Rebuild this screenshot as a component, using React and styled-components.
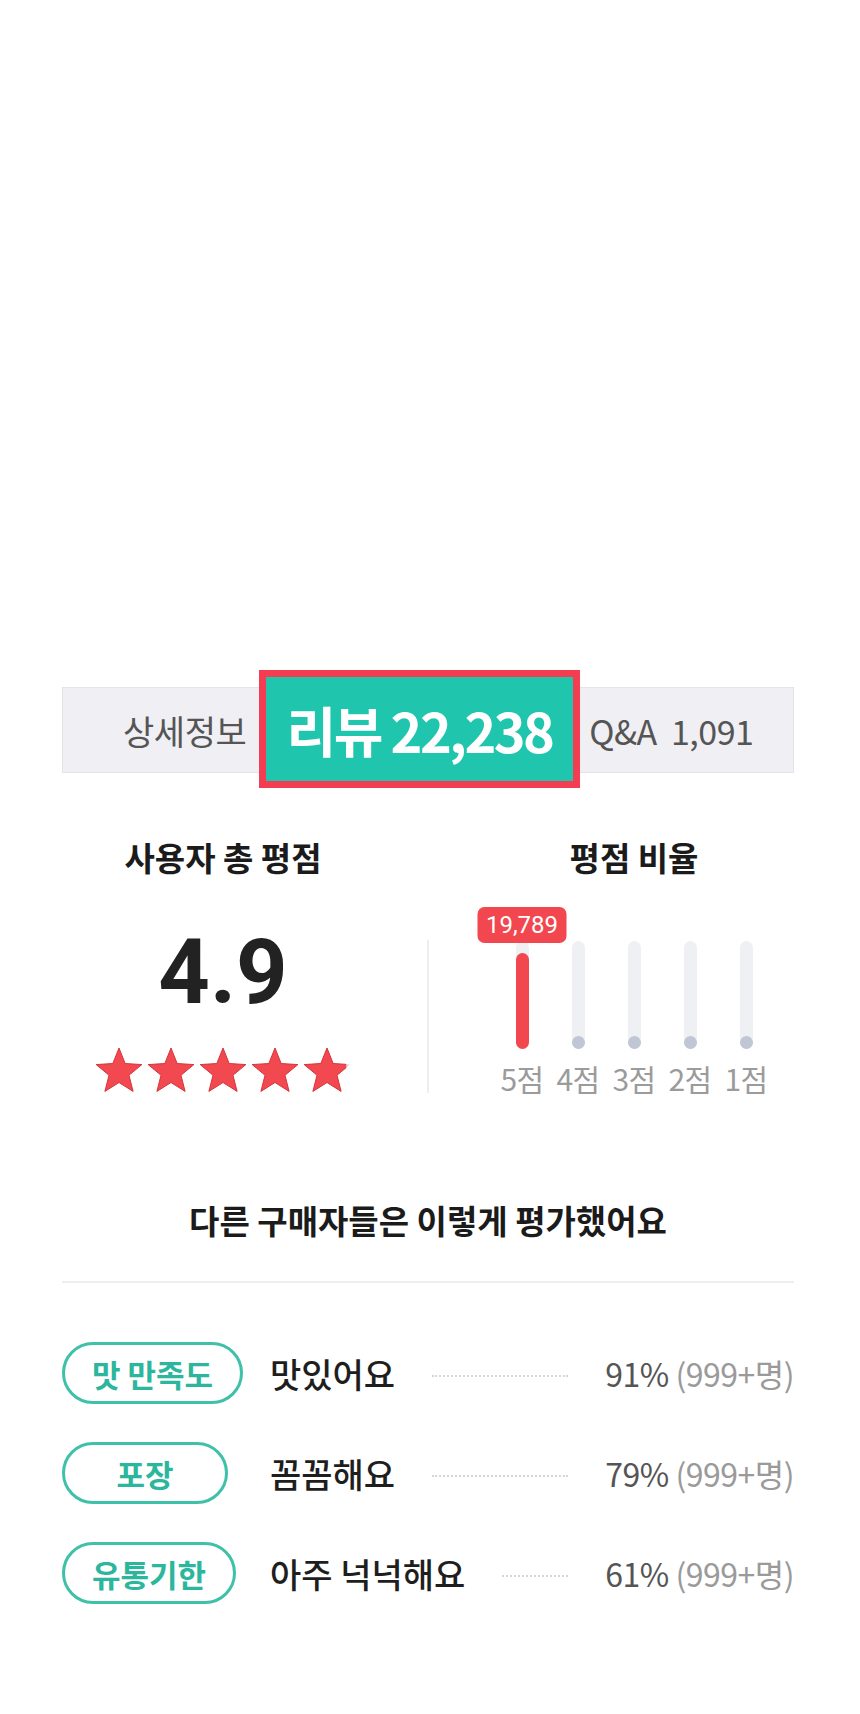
import React from 'react';
import styled, { createGlobalStyle } from 'styled-components';

const GlobalStyle = createGlobalStyle`
  html, body { margin: 0; padding: 0; background: #fff; }
  body {
    font-family: "Noto Sans CJK KR", "Noto Sans", sans-serif;
    -webkit-font-smoothing: antialiased;
  }
  * { box-sizing: border-box; }
`;

const Page = styled.div`
  width: 860px;
  min-height: 1714px;
  padding: 687px 66px 0 62px;
`;

const Tabs = styled.nav`
  display: grid;
  grid-template-columns: repeat(3, 1fr);
  height: 86px;
  background: #efeff4;
  border: 1px solid #e3e3e8;
`;

const Tab = styled.div`
  position: relative;
  display: flex;
  align-items: center;
  justify-content: center;
  font-size: 34px;
  color: #555;
  letter-spacing: -0.5px;
  white-space: pre;
`;

const Highlight = styled.div`
  position: absolute;
  top: -18px;
  bottom: -16px;
  left: -47px;
  right: -30px;
  z-index: 2;
  background: #1fc5ad;
  border: 7px solid #f43d50;
  display: flex;
  align-items: center;
  justify-content: center;
  color: #fff;
  font-weight: 700;
  font-size: 54px;
  letter-spacing: -2.5px;
  white-space: nowrap;
`;

const Rating = styled.section`
  display: flex;
  margin-top: 67px;
  height: 253px;
`;

const ScoreCol = styled.div`
  width: 322px;
  display: flex;
  flex-direction: column;
  align-items: center;
`;

const ColTitle = styled.h3`
  margin: 0;
  font-size: 33px;
  line-height: 34px;
  font-weight: 700;
  color: #1b1b1b;
  white-space: nowrap;
`;

const Score = styled.div`
  margin-top: 54px;
  font-family: Roboto, "Noto Sans", sans-serif;
  font-weight: 700;
  font-size: 90px;
  line-height: 90px;
  color: #222;
`;

const Stars = styled.div`
  display: flex;
  gap: 4px;
  margin-top: 29px;
`;

const VDivider = styled.div`
  width: 2px;
  height: 153px;
  margin: 100px 0 0 43px;
  background: #eceef2;
`;

const ChartCol = styled.div`
  width: 280px;
  margin-left: 65px;
  display: flex;
  flex-direction: column;
  align-items: center;
`;

const Bars = styled.div`
  display: flex;
  margin-top: 67px;
`;

const BarItem = styled.div`
  width: 56px;
  display: flex;
  flex-direction: column;
  align-items: center;
`;

const Track = styled.div`
  position: relative;
  width: 13px;
  height: 108px;
  border-radius: 7px;
  background: #eef0f4;
  display: flex;
  flex-direction: column;
  justify-content: flex-end;
`;

const Fill = styled.div`
  width: 100%;
  border-radius: 7px;
  background: ${(p) => (p.$active ? '#f2474f' : '#c0c6d4')};
`;

const Bubble = styled.span`
  position: absolute;
  bottom: calc(100% - 2px);
  left: 50%;
  transform: translateX(-50%);
  width: 89px;
  height: 36px;
  border-radius: 7px;
  background: #f2474f;
  color: #fff;
  font-family: Roboto, "Noto Sans", sans-serif;
  font-size: 24px;
  line-height: 36px;
  text-align: center;
`;

const BarLabel = styled.span`
  margin-top: 14px;
  font-size: 30px;
  line-height: 30px;
  color: #9b9b9b;
  white-space: nowrap;
  letter-spacing: -0.5px;
`;

const Summary = styled.h2`
  margin: 109px 0 0;
  text-align: center;
  font-size: 33px;
  line-height: 36px;
  font-weight: 700;
  color: #1b1b1b;
`;

const Rule = styled.hr`
  margin: 43px 0 0;
  border: 0;
  border-top: 2px solid #eeeeee;
`;

const List = styled.ul`
  list-style: none;
  margin: 59px 0 0;
  padding: 0;
  display: flex;
  flex-direction: column;
  gap: 38px;
`;

const Row = styled.li`
  display: grid;
  grid-template-columns: 208px auto 1fr auto;
  align-items: center;
  height: 62px;
`;

const Pill = styled.span`
  justify-self: start;
  min-width: 166px;
  height: 62px;
  padding: 0 27px;
  border: 3px solid #3fc0a8;
  border-radius: 31px;
  display: flex;
  align-items: center;
  justify-content: center;
  font-size: 31px;
  font-weight: 700;
  color: #2cb69d;
  white-space: nowrap;
`;

const Answer = styled.span`
  font-size: 34px;
  font-weight: 500;
  color: #1e1e1e;
  white-space: nowrap;
`;

const Dots = styled.span`
  margin: 6px 37px 0;
  height: 0;
  border-top: 2px dotted #d6d6d6;
`;

const Percent = styled.span`
  font-size: 32px;
  color: #555;
  white-space: nowrap;
  letter-spacing: -0.5px;
`;

const Count = styled.span`
  color: #9a9a9a;
`;

const STAR = '24,1 30.17,16.51 46.83,17.58 33.99,28.24 38.11,44.42 24,35.5 9.89,44.42 14.01,28.24 1.17,17.58 17.83,16.51';

function Star({ fill = 1, id }) {
  return (
    <svg width="48" height="46" viewBox="0 0 48 46">
      <defs>
        <clipPath id={id}>
          <rect x="0" y="0" width={48 * fill} height="46" />
        </clipPath>
      </defs>
      {fill < 1 && <polygon points={STAR} fill="#d3d3d3" />}
      <polygon
        points={STAR}
        fill="#f2484f"
        stroke="#d6343b"
        strokeWidth="1"
        strokeLinejoin="round"
        clipPath={`url(#${id})`}
      />
    </svg>
  );
}

const bars = [
  { label: '5점', count: 19789 },
  { label: '4점', count: 0 },
  { label: '3점', count: 0 },
  { label: '2점', count: 0 },
  { label: '1점', count: 0 },
];
const TOTAL = 22238;

const rows = [
  { tag: '맛 만족도', answer: '맛있어요', pct: '91%' },
  { tag: '포장', answer: '꼼꼼해요', pct: '79%' },
  { tag: '유통기한', answer: '아주 넉넉해요', pct: '61%' },
];

export default function App() {
  return (
    <>
      <GlobalStyle />
      <Page>
        <Tabs>
          <Tab>상세정보</Tab>
          <Tab>
            <Highlight>리뷰 22,238</Highlight>
          </Tab>
          <Tab>{'Q&A  1,091'}</Tab>
        </Tabs>

        <Rating>
          <ScoreCol>
            <ColTitle>사용자 총 평점</ColTitle>
            <Score>4.9</Score>
            <Stars>
              {[1, 1, 1, 1, 0.9].map((f, i) => (
                <Star key={i} fill={f} id={`star-clip-${i}`} />
              ))}
            </Stars>
          </ScoreCol>
          <VDivider />
          <ChartCol>
            <ColTitle>평점 비율</ColTitle>
            <Bars>
              {bars.map((b, i) => {
                const h = Math.max(13, Math.round((b.count / TOTAL) * 108));
                return (
                  <BarItem key={b.label}>
                    <Track>
                      {i === 0 && <Bubble>19,789</Bubble>}
                      <Fill $active={i === 0} style={{ height: h }} />
                    </Track>
                    <BarLabel>{b.label}</BarLabel>
                  </BarItem>
                );
              })}
            </Bars>
          </ChartCol>
        </Rating>

        <Summary>다른 구매자들은 이렇게 평가했어요</Summary>
        <Rule />

        <List>
          {rows.map((r) => (
            <Row key={r.tag}>
              <Pill>{r.tag}</Pill>
              <Answer>{r.answer}</Answer>
              <Dots />
              <Percent>
                {r.pct} <Count>(999+명)</Count>
              </Percent>
            </Row>
          ))}
        </List>
      </Page>
    </>
  );
}
